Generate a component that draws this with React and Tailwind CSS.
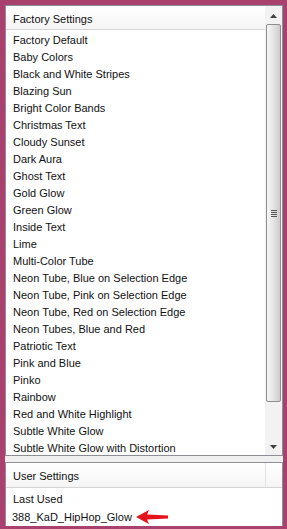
const factory = [
  "Factory Default",
  "Baby Colors",
  "Black and White Stripes",
  "Blazing Sun",
  "Bright Color Bands",
  "Christmas Text",
  "Cloudy Sunset",
  "Dark Aura",
  "Ghost Text",
  "Gold Glow",
  "Green Glow",
  "Inside Text",
  "Lime",
  "Multi-Color Tube",
  "Neon Tube, Blue on Selection Edge",
  "Neon Tube, Pink on Selection Edge",
  "Neon Tube, Red on Selection Edge",
  "Neon Tubes, Blue and Red",
  "Patriotic Text",
  "Pink and Blue",
  "Pinko",
  "Rainbow",
  "Red and White Highlight",
  "Subtle White Glow",
  "Subtle White Glow with Distortion",
];

// kleine Pfeile der Bildlaufleiste
function ArrowTri({ down }) {
  return (
    <svg width="7" height="4" viewBox="0 0 7 4">
      <polygon points={down ? "0,0 7,0 3.5,4" : "3.5,0 7,4 0,4"} fill="#404040" />
    </svg>
  );
}

function Scrollbar() {
  return (
    <div className="flex w-[17px] flex-col bg-[#f2f2f2]">
      <div className="flex h-[18px] items-center justify-center pt-[2px]">
        <ArrowTri />
      </div>
      <div className="mx-[1px] flex h-[378px] items-center justify-center rounded-[2px] border border-[#8e8e8e] bg-gradient-to-r from-[#f6f6f6] via-[#e4e4e4] to-[#cdcdcd]">
        <div className="flex flex-col gap-[1px]">
          <div className="h-px w-[6px] bg-[#555]" />
          <div className="h-px w-[6px] bg-[#555]" />
          <div className="h-px w-[6px] bg-[#555]" />
          <div className="h-px w-[6px] bg-[#555]" />
        </div>
      </div>
      <div className="flex-1" />
      <div className="flex h-[17px] items-center justify-center">
        <ArrowTri down />
      </div>
    </div>
  );
}

function RedArrow() {
  return (
    <svg width="32" height="14" viewBox="0 0 32 14" className="ml-[4px]">
      <polygon
        points="0,7 13,0 11,4.5 32,5.5 32,8.5 11,9.5 13,14"
        fill="#e5121b"
      />
    </svg>
  );
}

export default function App() {
  return (
    <div
      className="h-[529px] w-[287px] bg-[#a8416e] pb-[3px] pl-[5px] pr-[4px] pt-[5px] text-[11px] text-[#111]"
      style={{ fontFamily: '"Liberation Sans", Arial, sans-serif' }}
    >
      <div className="flex h-full flex-col gap-[6px] bg-[#f0f0f0]">
        <div className="flex h-[451px] overflow-hidden border border-[#8c8f96] bg-white">
          <div className="flex flex-1 flex-col overflow-hidden">
            <div className="flex h-[24px] shrink-0 items-center border-b border-[#d5d5d5] bg-gradient-to-b from-white to-[#f5f5f5] pl-[7px] pt-[3px]">
              Factory Settings
            </div>
            <div className="flex flex-col">
              {factory.map((name) => (
                <div key={name} className="flex h-[17px] shrink-0 items-center whitespace-nowrap pl-[7px] pt-[3px]">
                  {name}
                </div>
              ))}
            </div>
          </div>
          <Scrollbar />
        </div>
        <div className="flex flex-1 flex-col overflow-hidden border-x border-t border-[#8c8f96] bg-white">
          <div className="flex h-[25px] shrink-0 border-b border-[#d5d5d5] bg-gradient-to-b from-white to-[#f5f5f5]">
            <div className="flex flex-1 items-center border-r border-[#e2e2e2] pl-[7px] pt-[3px]">User Settings</div>
            <div className="w-[16px]" />
          </div>
          <div className="flex h-[18px] items-center pl-[7px] pt-[4px]">Last Used</div>
          <div className="flex h-[18px] items-center pl-[6px] pt-[4px]">
            388_KaD_HipHop_Glow
            <RedArrow />
          </div>
        </div>
      </div>
    </div>
  );
}
